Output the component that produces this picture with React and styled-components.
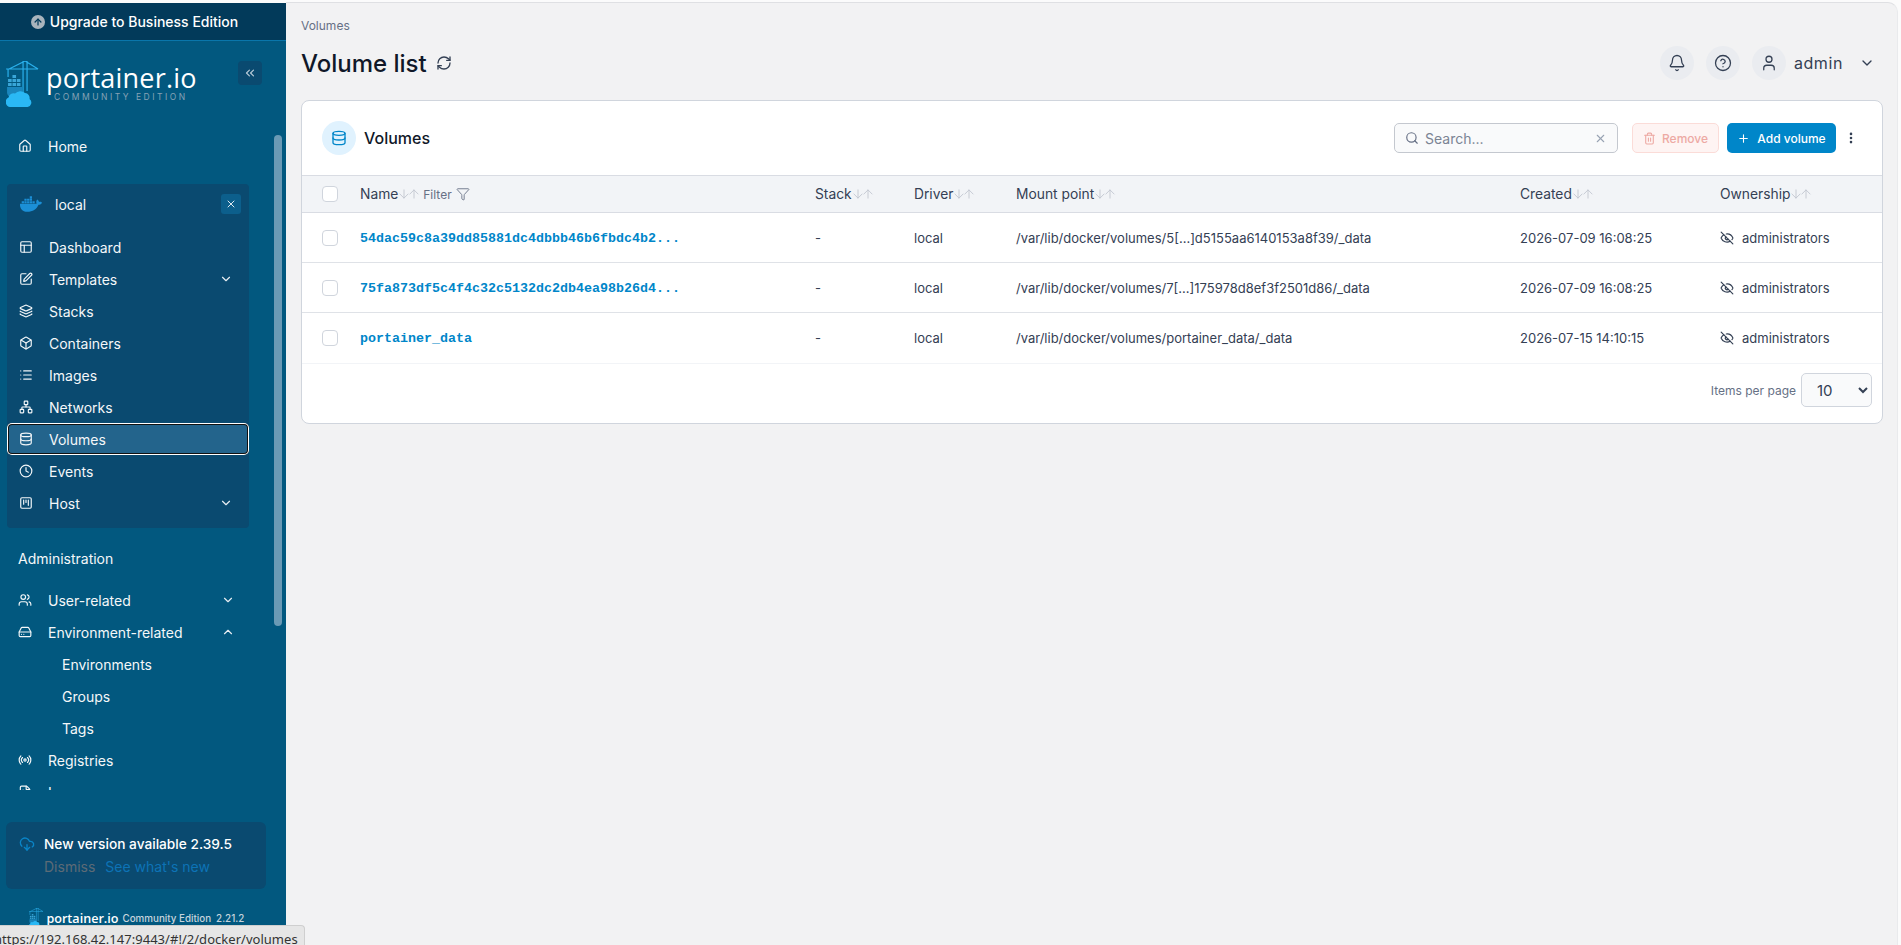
import React from 'react';
import styled, { createGlobalStyle } from 'styled-components';
import {
  House, PanelsTopLeft, SquarePen, Layers, Box, List, Network, Database, Clock, SquareKanban, Users, HardDrive,
  Radio, ChevronDown, ChevronUp, ChevronsLeft, CloudDownload, Bell, CircleHelp, User, RefreshCw, Search, X,
  Trash2, Plus, EllipsisVertical, Filter, EyeOff, ArrowDown, ArrowUp, FileText,
} from 'lucide-react';
import { FaDocker } from 'react-icons/fa';

const Global = createGlobalStyle`
  html, body { margin: 0; padding: 0; height: 100%; overflow: hidden; }
  body { font-family: Inter, "Liberation Sans", sans-serif; background: #fbfbfb; }
  * { box-sizing: border-box; }
`;

const Page = styled.div`
  position: relative;
  display: flex;
  height: 945px;
  overflow: hidden;
  padding-top: 3px;
  background: #fbfbfb;
`;

const Sidebar = styled.aside`
  width: 286px;
  flex: none;
  display: flex;
  flex-direction: column;
  background: #02587f;
  color: #fff;
`;

const UpgradeBar = styled.div`
  height: 38px;
  flex: none;
  display: flex;
  align-items: center;
  justify-content: center;
  gap: 5px;
  padding-right: 17px;
  background: #023a5a;
  border-bottom: 1px solid #0a76ab;
  font-size: 14px;
  font-weight: 500;
`;

const UpgradeDot = styled.span`
  width: 14px;
  height: 14px;
  border-radius: 50%;
  background: #a9b4bd;
  display: flex;
  align-items: center;
  justify-content: center;
  color: #023a5a;
`;

const BrandRow = styled.div`
  height: 89px;
  flex: none;
  display: flex;
  align-items: flex-start;
  padding: 20px 24px 0 6px;
`;

const BrandText = styled.div`
  display: flex;
  flex-direction: column;
  align-items: flex-start;
  margin-left: 7px;
  flex: 1;
`;

const BrandName = styled.div`
  font-family: "Open Sans", sans-serif;
  font-size: 27px;
  font-weight: 400;
  line-height: 26px;
  margin-top: 4px;
  letter-spacing: 0.2px;
`;

const BrandEdition = styled.div`
  font-size: 8.5px;
  letter-spacing: 2.5px;
  line-height: 10px;
  margin: 1px 0 0 8px;
  color: #86a2b5;
  white-space: nowrap;
`;

const CollapseButton = styled.div`
  width: 24px;
  height: 24px;
  flex: none;
  border-radius: 4px;
  background: #0a4a70;
  color: #b9cbd8;
  display: flex;
  align-items: center;
  justify-content: center;
`;

const NavScroll = styled.nav`
  position: relative;
  height: 660px;
  flex: none;
  overflow: hidden;
`;

const ScrollThumb = styled.div`
  position: absolute;
  left: 274px;
  top: 5px;
  width: 8px;
  height: 491px;
  border-radius: 4px;
  background: #6a9ab5;
`;

const NavItem = styled.div`
  height: 32px;
  display: flex;
  align-items: center;
  width: 239px;
  padding-left: 18px;
  font-size: 14px;
  color: #f4f7f9;
  svg.lead { width: 14px; height: 14px; margin-right: 16px; flex: none; }
`;

const NavLabel = styled.span`
  flex: 1;
`;

const NavChevron = styled.span`
  width: 14px;
  height: 14px;
  margin-right: ${p => p.$inset || 4}px;
  display: flex;
  color: #e6edf2;
`;

const SubItem = styled.div`
  height: 32px;
  display: flex;
  align-items: center;
  padding-left: 62px;
  font-size: 14px;
  color: #f4f7f9;
`;

const EnvBox = styled.section`
  width: 242px;
  height: 344px;
  margin: 22px 0 0 7px;
  border-radius: 4px;
  background: #0a4a70;
`;

const EnvHead = styled.div`
  height: 47px;
  padding: 0 8px 7px 13px;
  display: flex;
  align-items: center;
  font-size: 14px;
  color: #f4f7f9;
`;

const EnvName = styled.span`
  flex: 1;
  margin-left: 13px;
`;

const EnvClose = styled.span`
  width: 20px;
  height: 20px;
  border-radius: 3px;
  background: #0c5f8c;
  display: flex;
  align-items: center;
  justify-content: center;
  color: #dfe9f0;
`;

const EnvItem = styled.div`
  height: 32px;
  display: flex;
  align-items: center;
  padding-left: 12px;
  font-size: 14px;
  color: #f4f7f9;
  border-radius: 5px;
  background: ${p => (p.$active ? '#23648c' : 'transparent')};
  box-shadow: ${p => (p.$active ? 'inset 0 0 0 1px #fff, inset 0 0 0 2px #111' : 'none')};
  svg.lead { width: 14px; height: 14px; margin-right: 16px; flex: none; }
`;

const SectionTitle = styled.div`
  margin: 21px 0 15px 18px;
  font-size: 14px;
  line-height: 20px;
  color: #f4f7f9;
`;

const Notice = styled.div`
  width: 260px;
  height: 67px;
  margin: 32px 0 0 6px;
  flex: none;
  padding: 11px 0 0 13px;
  border-radius: 6px;
  background: #0a4a70;
  display: grid;
  grid-template-columns: 25px 1fr;
  grid-template-rows: 22px 22px;
  align-items: center;
`;

const NoticeTitle = styled.div`
  font-size: 13.7px;
  font-weight: 500;
`;

const NoticeLinks = styled.div`
  grid-column: 2;
  display: flex;
  gap: 10px;
  font-size: 14px;
`;

const Dismiss = styled.span`
  color: #5d6b76;
`;

const SeeNew = styled.span`
  color: #0d73b6;
`;

const Footer = styled.div`
  display: flex;
  align-items: center;
  margin: 18px 0 0 29px;
  height: 22px;
  color: #c6d4dd;
  white-space: nowrap;
`;

const FooterBrand = styled.span`
  font-family: "Open Sans", sans-serif;
  font-size: 12.6px;
  font-weight: 600;
  color: #fff;
  margin: 0 4px 0 3px;
`;

const FooterMeta = styled.span`
  font-size: 9.8px;
  font-weight: 500;
  margin-right: 5px;
`;

const StatusTip = styled.div`
  position: absolute;
  left: 0;
  bottom: 0;
  width: 305px;
  height: 20px;
  background: #e6e6e6;
  border: 1px solid #cfcfcf;
  border-left: 0;
  border-bottom: 0;
  border-top-right-radius: 4px;
  font-family: "Noto Sans", sans-serif;
  font-size: 13px;
  line-height: 27px;
  color: #333;
  white-space: nowrap;
  overflow: hidden;
  text-indent: -6px;
  letter-spacing: 0.03px;
`;

const Main = styled.main`
  flex: 1;
  min-width: 0;
  margin: -1px 3px 0 0;
  padding: 0 14px 0 15px;
  background: #f2f2f3;
  border-top: 1px solid #dfe0e3;
  border-right: 1px solid #e9eaec;
  border-top-right-radius: 10px;
`;

const Crumb = styled.div`
  height: 44px;
  padding-top: 15px;
  font-size: 12px;
  line-height: 15px;
  color: #667085;
`;

const TitleRow = styled.header`
  height: 34px;
  display: flex;
  align-items: center;
  margin-top: -1px;
`;

const PageTitle = styled.h1`
  margin: 0;
  font-size: 24px;
  font-weight: 500;
  color: #101828;
`;

const TitleRefresh = styled.span`
  display: flex;
  margin-left: 9px;
  color: #344054;
  flex: 1;
`;

const RoundIcon = styled.span`
  width: 34px;
  height: 34px;
  border-radius: 50%;
  margin-left: 12px;
  background: #eaecf0;
  color: #344054;
  display: flex;
  align-items: center;
  justify-content: center;
`;

const UserName = styled.span`
  margin: 0 16px 0 8px;
  font-size: 16px;
  letter-spacing: 0.6px;
  color: #344054;
`;

const UserMenu = styled.span`
  display: flex;
  color: #344054;
  margin-right: 8px;
`;

const Card = styled.section`
  margin-top: 20px;
  height: 324px;
  background: #fff;
  border: 1px solid #d0d5dd;
  border-radius: 8px;
  overflow: hidden;
`;

const CardHead = styled.div`
  height: 74px;
  display: flex;
  align-items: center;
  padding: 0 24px 0 20px;
`;

const CardIcon = styled.span`
  width: 34px;
  height: 34px;
  border-radius: 50%;
  background: #e0f2fe;
  color: #0086c9;
  display: flex;
  align-items: center;
  justify-content: center;
`;

const CardTitle = styled.h2`
  margin: 0 0 0 8px;
  flex: 1;
  font-size: 16px;
  font-weight: 500;
  color: #101828;
`;

const SearchBox = styled.label`
  width: 224px;
  height: 30px;
  display: flex;
  align-items: center;
  padding: 0 10px 0 10px;
  gap: 4px;
  background: #f9fafb;
  border: 1px solid #c4c8cf;
  border-radius: 5px;
  color: #667085;
  svg:last-child { color: #98a2b3; }
`;

const SearchInput = styled.input`
  flex: 1;
  min-width: 0;
  border: 0;
  outline: 0;
  background: transparent;
  font: 400 14px Inter, sans-serif;
  &::placeholder { color: #7b8494; opacity: 1; }
`;

const RemoveButton = styled.button`
  width: 87px;
  height: 30px;
  margin-left: 14px;
  display: flex;
  align-items: center;
  justify-content: center;
  gap: 6px;
  padding: 0;
  border: 1px solid #fbdcd8;
  border-radius: 5px;
  background: #fef4f3;
  color: #eda9a3;
  font: 500 12px Inter, sans-serif;
`;

const AddButton = styled.button`
  width: 109px;
  height: 30px;
  margin-left: 8px;
  display: flex;
  align-items: center;
  justify-content: center;
  gap: 7px;
  padding: 0;
  border: 0;
  border-radius: 5px;
  background: #0086c9;
  color: #fff;
  font: 500 12px Inter, sans-serif;
`;

const MoreButton = styled.span`
  display: flex;
  margin-left: 8px;
  color: #344054;
`;

const gridCols = '58px 455px 99px 102px 504px 200px 1fr';

const HeadRow = styled.div`
  height: 38px;
  display: grid;
  grid-template-columns: ${gridCols};
  align-items: center;
  background: #f2f4f7;
  border-top: 1px solid #d9dce3;
  border-bottom: 1px solid #d9dce3;
  font-size: 13.8px;
  color: #344054;
`;

const BodyRow = styled.div`
  height: ${p => (p.$last ? 51 : 50)}px;
  padding-bottom: ${p => (p.$last ? 1 : 0)}px;
  display: grid;
  grid-template-columns: ${gridCols};
  align-items: center;
  border-bottom: 1px solid ${p => (p.$last ? '#f2f4f7' : '#dfe2e7')};
  font-size: 13px;
  color: #344054;
`;

const CheckCell = styled.div`
  padding-left: 20px;
  display: flex;
`;

const CheckBox = styled.span`
  width: 16px;
  height: 16px;
  border-radius: 4px;
  border: 1px solid #d0d5dd;
  background: #fff;
`;

const HeadCell = styled.div`
  display: flex;
  align-items: center;
`;

const Sort = styled.span`
  display: flex;
  margin-left: -1px;
  color: #c0c5cf;
  svg + svg { margin-left: -4px; }
`;

const FilterLabel = styled.span`
  display: flex;
  align-items: center;
  gap: 4px;
  margin-left: 2px;
  font-size: 12px;
  color: #667085;
`;

const VolumeLink = styled.a`
  font-family: "Liberation Mono", monospace;
  font-size: 13.33px;
  font-weight: 700;
  color: #0086c9;
  text-decoration: none;
`;

const Owner = styled.div`
  display: flex;
  align-items: center;
  gap: 8px;
`;

const PageFoot = styled.div`
  display: flex;
  justify-content: flex-end;
  align-items: center;
  padding: 9px 10px 0 0;
  gap: 5px;
`;

const PerPage = styled.span`
  font-size: 12px;
  color: #667085;
`;

const PageSelect = styled.select`
  width: 71px;
  height: 34px;
  padding-left: 11px;
  background: #f9fafb;
  border: 1px solid #d0d5dd;
  border-radius: 5px;
  font: 400 15px Inter, sans-serif;
  color: #344054;
`;

const PortainerMark = ({ size = 46 }) => (
  <svg width={size * 0.72} height={size} viewBox="0 0 33 46" fill="none">
    <g stroke="#2ab0ec" strokeWidth="1.2">
      <path d="M0 8h32M17 0v8M21 0v30M17 8v24M17 0h4M3 8L19 0l13 8M2 8v8" />
    </g>
    <g fill="#3aa6d8">
      <rect x="2" y="18" width="3.6" height="3" /><rect x="6.4" y="18" width="3.6" height="3" />
      <rect x="10.8" y="18" width="3.6" height="3" /><rect x="6.4" y="14" width="3.6" height="3" />
      <rect x="2" y="22" width="3.6" height="3" /><rect x="6.4" y="22" width="3.6" height="3" />
      <rect x="10.8" y="22" width="3.6" height="3" />
    </g>
    <path d="M1 26h15v7a6 6 0 0 1-6 3H5a5 5 0 0 1-4-4z" fill="#1a86bd" />
    <path d="M5 46a5 5 0 0 1-2.500-9.500 5 5 0 0 1 6.500-4 7 7 0 0 1 10-.5 5 5 0 0 1 4.500 6 4.500 4.500 0 0 1-2 8z" fill="#2ab8f5" />
  </svg>
);

const sortIcons = (
  <Sort>
    <ArrowDown size={14} strokeWidth={1.5} />
    <ArrowUp size={14} strokeWidth={1.5} />
  </Sort>
);

const rows = [
  ['54dac59c8a39dd85881dc4dbbb46b6fbdc4b2...', '/var/lib/docker/volumes/5[...]d5155aa6140153a8f39/_data', '2026-07-09 16:08:25'],
  ['75fa873df5c4f4c32c5132dc2db4ea98b26d4...', '/var/lib/docker/volumes/7[...]175978d8ef3f2501d86/_data', '2026-07-09 16:08:25'],
  ['portainer_data', '/var/lib/docker/volumes/portainer_data/_data', '2026-07-15 14:10:15'],
];

const envItems = [
  [PanelsTopLeft, 'Dashboard'],
  [SquarePen, 'Templates', true],
  [Layers, 'Stacks'],
  [Box, 'Containers'],
  [List, 'Images'],
  [Network, 'Networks'],
  [Database, 'Volumes', false, true],
  [Clock, 'Events'],
  [SquareKanban, 'Host', true],
];

export default function App() {
  return (
    <Page>
      <Global />
      <Sidebar>
        <UpgradeBar>
          <UpgradeDot><ArrowUp size={10} strokeWidth={3} /></UpgradeDot>
          Upgrade to Business Edition
        </UpgradeBar>
        <BrandRow>
          <PortainerMark />
          <BrandText>
            <BrandName>portainer.io</BrandName>
            <BrandEdition>COMMUNITY EDITION</BrandEdition>
          </BrandText>
          <CollapseButton><ChevronsLeft size={14} /></CollapseButton>
        </BrandRow>
        <NavScroll>
          <NavItem><House className="lead" /><NavLabel>Home</NavLabel></NavItem>
          <EnvBox>
            <EnvHead>
              <FaDocker size={22} color="#1b8fd6" />
              <EnvName>local</EnvName>
              <EnvClose><X size={12} /></EnvClose>
            </EnvHead>
            {envItems.map(([Icon, label, more, active]) => (
              <EnvItem key={label} $active={active}>
                <Icon className="lead" />
                <NavLabel>{label}</NavLabel>
                {more && <NavChevron $inset={16}><ChevronDown size={14} /></NavChevron>}
              </EnvItem>
            ))}
          </EnvBox>
          <SectionTitle>Administration</SectionTitle>
          <NavItem><Users className="lead" /><NavLabel>User-related</NavLabel><NavChevron><ChevronDown size={14} /></NavChevron></NavItem>
          <NavItem><HardDrive className="lead" /><NavLabel>Environment-related</NavLabel><NavChevron><ChevronUp size={14} /></NavChevron></NavItem>
          <SubItem>Environments</SubItem>
          <SubItem>Groups</SubItem>
          <SubItem>Tags</SubItem>
          <NavItem><Radio className="lead" /><NavLabel>Registries</NavLabel></NavItem>
          <NavItem><FileText className="lead" /><NavLabel>Logs</NavLabel></NavItem>
          <ScrollThumb />
        </NavScroll>
        <Notice>
          <CloudDownload size={16} color="#0a84c6" />
          <NoticeTitle>New version available 2.39.5</NoticeTitle>
          <NoticeLinks><Dismiss>Dismiss</Dismiss><SeeNew>See what's new</SeeNew></NoticeLinks>
        </Notice>
        <Footer>
          <PortainerMark size={20} />
          <FooterBrand>portainer.io</FooterBrand>
          <FooterMeta>Community Edition</FooterMeta>
          <FooterMeta>2.21.2</FooterMeta>
        </Footer>
      </Sidebar>
      <Main>
        <Crumb>Volumes</Crumb>
        <TitleRow>
          <PageTitle>Volume list</PageTitle>
          <TitleRefresh><RefreshCw size={16} /></TitleRefresh>
          <RoundIcon><Bell size={18} strokeWidth={1.7} /></RoundIcon>
          <RoundIcon><CircleHelp size={18} strokeWidth={1.7} /></RoundIcon>
          <RoundIcon><User size={18} strokeWidth={1.7} /></RoundIcon>
          <UserName>admin</UserName>
          <UserMenu><ChevronDown size={16} /></UserMenu>
        </TitleRow>
        <Card>
          <CardHead>
            <CardIcon><Database size={16} /></CardIcon>
            <CardTitle>Volumes</CardTitle>
            <SearchBox>
              <Search size={14} />
              <SearchInput placeholder="Search..." />
              <X size={13} />
            </SearchBox>
            <RemoveButton><Trash2 size={13} />Remove</RemoveButton>
            <AddButton><Plus size={13} />Add volume</AddButton>
            <MoreButton><EllipsisVertical size={14} strokeWidth={2.5} /></MoreButton>
          </CardHead>
          <HeadRow>
            <CheckCell><CheckBox /></CheckCell>
            <HeadCell>Name{sortIcons}<FilterLabel>Filter <Filter size={14} strokeWidth={1.5} /></FilterLabel></HeadCell>
            <HeadCell>Stack{sortIcons}</HeadCell>
            <HeadCell>Driver{sortIcons}</HeadCell>
            <HeadCell>Mount point{sortIcons}</HeadCell>
            <HeadCell>Created{sortIcons}</HeadCell>
            <HeadCell>Ownership{sortIcons}</HeadCell>
          </HeadRow>
          {rows.map(([name, mount, created], i) => (
            <BodyRow key={name} $last={i === 2}>
              <CheckCell><CheckBox /></CheckCell>
              <div><VolumeLink href="#">{name}</VolumeLink></div>
              <div>-</div>
              <div>local</div>
              <div>{mount}</div>
              <div>{created}</div>
              <Owner><EyeOff size={14} />administrators</Owner>
            </BodyRow>
          ))}
          <PageFoot>
            <PerPage>Items per page</PerPage>
            <PageSelect defaultValue="10"><option>10</option><option>25</option></PageSelect>
          </PageFoot>
        </Card>
      </Main>
      <StatusTip>https://192.168.42.147:9443/#!/2/docker/volumes</StatusTip>
    </Page>
  );
}
